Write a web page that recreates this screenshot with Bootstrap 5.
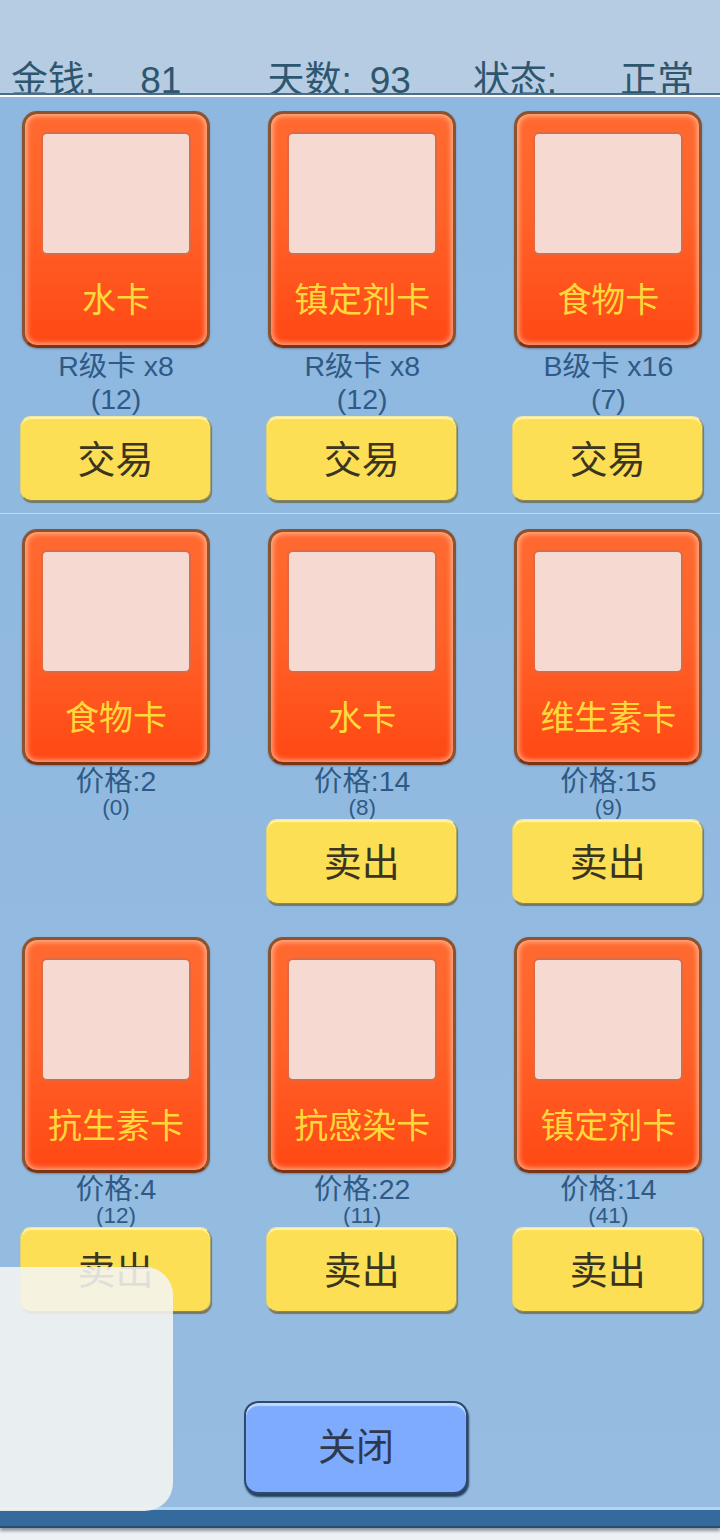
<!DOCTYPE html>
<html lang="zh-CN">
<head>
    <meta charset="UTF-8">
    <meta name="viewport" content="width=device-width, initial-scale=1.0">
    <title>交易</title>
    <link rel="stylesheet" href="https://cdn.jsdelivr.net/npm/bootstrap@5.3.0/dist/css/bootstrap.min.css">
    <style>
        html, body {
            width: 720px;
            height: 1540px;
            overflow: hidden;
        }

        body {
            font-family: "Liberation Sans", "Noto Sans CJK SC", sans-serif;
            background-color: #eef1f4;
        }

        /* Top status bar */
        .status-bar {
            height: 97px;
            background-color: #b5cce2;
            border-bottom: 2px solid #fff;
            overflow: hidden;
            color: #2f566f;
            font-size: 37px;
            line-height: 1;
        }

        .status-line {
            height: 93px;
            padding-top: 62px;
            overflow: hidden;
        }

        .status-rule {
            height: 2px;
            background-color: #4d6c85;
        }

        .status-item {
            white-space: nowrap;
        }

        /* Main panel */
        .shop-panel {
            height: 1431px;
            background: linear-gradient(#8eb8e0, #96bce0);
            padding: 14px 16.6px 0 19px;
        }

        .shop-row {
            display: grid;
            grid-template-columns: repeat(3, 192px);
            column-gap: 54.2px;
        }

        .shop-divider {
            height: 1px;
            background-color: #c3d8ec;
            margin: 12px -17px 15px -19px;
        }

        .row-gap {
            height: 33px;
        }

        /* Orange item card */
        .item-card {
            width: 188px;
            height: 237px;
            margin-left: 3px;
            padding: 18px 16px 0;
            background: linear-gradient(#ff6a30, #ff6228 45%, #ff4814);
            border: 3px solid #8b5430;
            border-bottom-color: #7a3517;
            border-radius: 15px;
            box-shadow: inset 0 0 5px 2px rgba(255, 205, 175, .7), 0 1px 2px rgba(80, 60, 60, .4);
        }

        .item-card-sell {
            height: 236px;
        }

        .item-art {
            height: 123px;
            background-color: #f6d9d0;
            border: 2px solid #dd6a42;
            border-radius: 6px;
        }

        .item-name {
            margin-top: 23px;
            color: #ffd93b;
            font-size: 34px;
            line-height: 44px;
            text-align: center;
            white-space: nowrap;
        }

        /* Text under the cards */
        .item-info {
            color: #2f5a85;
            text-align: center;
            margin-left: 2px;
        }

        .info-trade {
            height: 68px;
            font-size: 28.5px;
            line-height: 33px;
            padding-top: 2px;
        }

        .info-sell {
            height: 54px;
            padding-top: 1px;
        }

        .info-price {
            font-size: 28.4px;
            line-height: 30px;
        }

        .info-count {
            font-size: 22.5px;
            line-height: 24px;
        }

        /* Buttons */
        .btn-yellow {
            display: block;
            position: relative;
            width: 191px;
            height: 85px;
            margin-left: 1px;
            padding: 3px 0 0;
            background-color: #fcdf55;
            border: 1px solid;
            border-color: #f3e79f #a9a566 #8a8760 #d8cf80;
            border-radius: 11px;
            box-shadow: inset 0 2px 1px #fff3b0, 1px 2px 1px #75785f;
            color: #3a3420;
            font-size: 38px;
            line-height: 1;
        }

        .btn-spacer {
            height: 85px;
        }

        .btn-close-panel {
            display: block;
            width: 224px;
            height: 93px;
            margin: 89px 0 0 225px;
            padding: 0 0 2px;
            background-color: #7eabfd;
            border: 2px solid #2d4a70;
            border-radius: 14px;
            box-shadow: inset 0 3px 1px #c0d8fb, 1px 3px 2px #24405f;
            color: #2e3a4c;
            font-size: 38px;
            line-height: 1;
        }

        /* Bottom bar */
        .footer-bar {
            height: 18px;
            margin-top: 16px;
            margin-left: -19px;
            margin-right: -17px;
            background-color: #346a9e;
            box-shadow: 0 -3px 0 #b5d2ee, inset 0 -2px 0 #2a4c70, 0 3px 3px #8d98a3;
        }

        /* Translucent panel lying over the page */
        .toast-panel {
            position: absolute;
            left: 0;
            top: 1267px;
            width: 173px;
            height: 244px;
            background-color: rgba(244, 244, 242, .89);
            border-radius: 0 28px 28px 0;
            z-index: 5;
        }
    </style>
</head>
<body class="position-relative">
    <header class="status-bar">
        <div class="status-line d-flex">
            <span class="status-item" id="s-money">金钱:</span>
            <span class="status-item" id="s-money-v">81</span>
            <span class="status-item" id="s-days">天数:</span>
            <span class="status-item" id="s-days-v">93</span>
            <span class="status-item" id="s-state">状态:</span>
            <span class="status-item" id="s-state-v">正常</span>
        </div>
        <div class="status-rule"></div>
    </header>

    <main class="shop-panel" id="panel"></main>

    <div class="toast-panel"></div>

    <script src="https://cdn.jsdelivr.net/npm/bootstrap@5.3.0/dist/js/bootstrap.bundle.min.js"></script>
    <script>
        const trade = [
            { name: '水卡', grade: 'R级卡 x8', count: 12 },
            { name: '镇定剂卡', grade: 'R级卡 x8', count: 12 },
            { name: '食物卡', grade: 'B级卡 x16', count: 7 }
        ];
        const sell = [
            [
                { name: '食物卡', price: 2, count: 0 },
                { name: '水卡', price: 14, count: 8 },
                { name: '维生素卡', price: 15, count: 9 }
            ],
            [
                { name: '抗生素卡', price: 4, count: 12 },
                { name: '抗感染卡', price: 22, count: 11 },
                { name: '镇定剂卡', price: 14, count: 41 }
            ]
        ];

        const card = (name, cls = '') => `
            <div class="item-card ${cls}">
                <div class="item-art"></div>
                <div class="item-name">${name}</div>
            </div>`;

        const tradeTile = item => `
            <div>
                ${card(item.name)}
                <div class="item-info info-trade">${item.grade}<br>(${item.count})</div>
                <button class="btn btn-yellow">交易</button>
            </div>`;

        // no button when there is nothing left to sell
        const sellTile = item => `
            <div>
                ${card(item.name, 'item-card-sell')}
                <div class="item-info info-sell">
                    <div class="info-price">价格:${item.price}</div>
                    <div class="info-count">(${item.count})</div>
                </div>
                ${item.count > 0 ? '<button class="btn btn-yellow">卖出</button>' : '<div class="btn-spacer"></div>'}
            </div>`;

        document.getElementById('panel').innerHTML = `
            <div class="shop-row">${trade.map(tradeTile).join('')}</div>
            <div class="shop-divider"></div>
            <div class="shop-row">${sell[0].map(sellTile).join('')}</div>
            <div class="row-gap"></div>
            <div class="shop-row">${sell[1].map(sellTile).join('')}</div>
            <button class="btn btn-close-panel">关闭</button>
            <div class="footer-bar"></div>`;

        // spread the status values along the bar
        const gaps = { 's-money': 11, 's-money-v': 45, 's-days': 86, 's-days-v': 18, 's-state': 62, 's-state-v': 63 };
        Object.keys(gaps).forEach(id => {
            document.getElementById(id).style.marginLeft = gaps[id] + 'px';
        });
    </script>
</body>
</html>
